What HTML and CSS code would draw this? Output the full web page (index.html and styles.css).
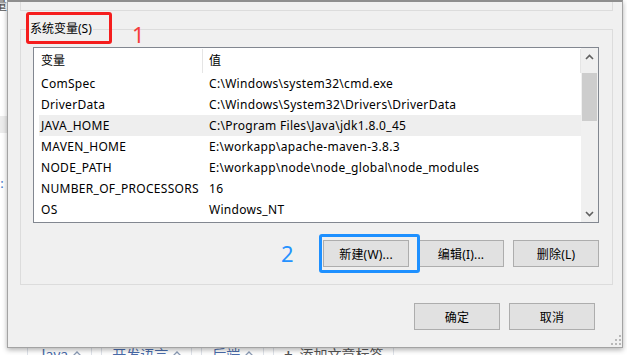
FILE: index.html
```html
<!DOCTYPE html>
<html lang="zh-CN">
<head>
    <meta charset="UTF-8">
    <title>环境变量</title>
    <link rel="stylesheet" href="styles.css">
</head>
<body>
    <div class="backdrop">
        <div class="edge-text">量</div>
        <div class="edge-bar"></div>
        <div class="edge-link">i:</div>
        <div class="tag-row">
            <span class="tag">Java <svg class="caret" width="10" height="6" viewBox="0 0 10 6"><path d="M1 5 L5 1 L9 5" fill="none" stroke="#8a9ab5" stroke-width="1.3"/></svg></span>
            <span class="tag">开发语言 <svg class="caret" width="10" height="6" viewBox="0 0 10 6"><path d="M1 5 L5 1 L9 5" fill="none" stroke="#8a9ab5" stroke-width="1.3"/></svg></span>
            <span class="tag">后端 <svg class="caret" width="10" height="6" viewBox="0 0 10 6"><path d="M1 5 L5 1 L9 5" fill="none" stroke="#8a9ab5" stroke-width="1.3"/></svg></span>
            <span class="tag tag-add"><b>+</b> 添加文章标签</span>
        </div>
    </div>

    <div class="dialog">
        <div class="prev-group"></div>

        <div class="group">
            <span class="group-title">系统变量(S)</span>
            <div class="list">
                <div class="list-body">
                    <div class="list-head">
                        <div class="head-cell first">变量</div>
                        <div class="head-cell second">值</div>
                    </div>
                    <div class="row"><span>ComSpec</span><span>C:\Windows\system32\cmd.exe</span></div>
                    <div class="row"><span>DriverData</span><span>C:\Windows\System32\Drivers\DriverData</span></div>
                    <div class="row selected"><span>JAVA_HOME</span><span>C:\Program Files\Java\jdk1.8.0_45</span></div>
                    <div class="row"><span>MAVEN_HOME</span><span>E:\workapp\apache-maven-3.8.3</span></div>
                    <div class="row"><span>NODE_PATH</span><span>E:\workapp\node\node_global\node_modules</span></div>
                    <div class="row"><span>NUMBER_OF_PROCESSORS</span><span>16</span></div>
                    <div class="row"><span>OS</span><span>Windows_NT</span></div>
                </div>
                <div class="scrollbar">
                    <div class="scroll-btn">
                        <svg width="9" height="6" viewBox="0 0 9 6"><path d="M1 5 L4.5 1.5 L8 5" fill="none" stroke="#606060" stroke-width="1.6"/></svg>
                    </div>
                    <div class="scroll-track"><div class="scroll-thumb"></div></div>
                    <div class="scroll-btn">
                        <svg width="9" height="6" viewBox="0 0 9 6"><path d="M1 1 L4.5 4.5 L8 1" fill="none" stroke="#606060" stroke-width="1.6"/></svg>
                    </div>
                </div>
            </div>
            <div class="button-row">
                <button>新建(W)...</button>
                <button>编辑(I)...</button>
                <button>删除(L)</button>
            </div>
        </div>

        <div class="footer">
            <button>确定</button>
            <button>取消</button>
        </div>

        <svg class="grip" width="10" height="10" viewBox="0 0 10 10">
            <rect x="8" y="0" width="2" height="2" fill="#b8b8b8"/>
            <rect x="4" y="4" width="2" height="2" fill="#b8b8b8"/>
            <rect x="8" y="4" width="2" height="2" fill="#b8b8b8"/>
            <rect x="0" y="8" width="2" height="2" fill="#b8b8b8"/>
            <rect x="4" y="8" width="2" height="2" fill="#b8b8b8"/>
            <rect x="8" y="8" width="2" height="2" fill="#b8b8b8"/>
        </svg>
    </div>

    <!-- annotations drawn on top of the screenshot -->
    <div class="mark-red"></div>
    <div class="num num-red">1</div>
    <div class="num num-blue">2</div>
    <div class="mark-blue"></div>
</body>
</html>
```

FILE: styles.css
```css
body {
    margin: 0;
    width: 627px;
    height: 355px;
    overflow: hidden;
    position: relative;
    background-color: #fff;
    font-family: "Noto Sans", "Noto Sans CJK SC", sans-serif;
}
.backdrop {
    height: 355px;
    display: flex;
    flex-direction: column;
}
.edge-text {
    margin: -4px 0 0 -6px;
    font-size: 13px;
    line-height: 16px;
    color: #555;
}
.edge-bar {
    margin-top: 104px;
    width: 7px;
    height: 17px;
    background-color: #ececec;
}
.edge-link {
    margin: 42px 0 0 -3px;
    font-size: 13px;
    line-height: 16px;
    color: #3d74c6;
}
.tag-row {
    margin-top: auto;
    margin-bottom: -17px;
    padding-left: 27px;
    display: flex;
    gap: 9px;
}
.tag {
    height: 30px;
    box-sizing: border-box;
    padding: 0 9px 0 10px;
    border: 1px solid #dfe3ea;
    font-size: 14px;
    line-height: 22px;
    color: #4a6cab;
    display: flex;
    align-items: flex-start;
    gap: 4px;
    font-family: "Noto Sans CJK SC", sans-serif;
}
.caret {
    margin-top: 8px;
}
.tag-add {
    color: #555;
}
.tag-add b {
    font-weight: 700;
    margin-right: 3px;
}

.dialog {
    position: absolute;
    left: 7px;
    top: 0;
    width: 616px;
    height: 348px;
    box-sizing: border-box;
    background-color: #f0f0f0;
    border: 1px solid #a3a3a3;
    border-top: 2px solid #8e8e8e;
    box-shadow: 0 2px 5px rgba(0, 0, 0, 0.3);
    font-size: 12px;
    color: #000;
    display: flex;
    flex-direction: column;
}
.prev-group {
    height: 9px;
    box-sizing: border-box;
    margin: 0 9px 0 12px;
    border: 1px solid #dcdcdc;
    border-top: none;
}
.group {
    position: relative;
    margin: 18px 9px 0 12px;
    padding: 17px 13px 17px 12px;
    border: 1px solid #dcdcdc;
}
.group-title {
    position: absolute;
    top: -9px;
    left: 8px;
    padding: 0 1px;
    line-height: 16px;
    background-color: #f0f0f0;
}
.list {
    height: 176px;
    box-sizing: border-box;
    border: 1px solid #828790;
    background-color: #fff;
    display: flex;
}
.list-body {
    flex: 1;
}
.list-head {
    height: 25px;
    display: flex;
    line-height: 25px;
}
.head-cell {
    border-right: 1px solid #e5e5e5;
    margin: 1px 0 0;
    line-height: 23px;
}
.head-cell.first {
    width: 161px;
    padding-left: 7px;
}
.head-cell.second {
    flex: 1;
    padding-left: 6px;
}
.row {
    height: 21px;
    margin-left: 5px;
    padding-left: 2px;
    line-height: 21px;
    letter-spacing: 0.3px;
    display: grid;
    grid-template-columns: 168px 1fr;
    white-space: nowrap;
}
.row.selected {
    background-color: #eeeeee;
}
.scrollbar {
    width: 17px;
    background-color: #f0f0f0;
    display: flex;
    flex-direction: column;
}
.scroll-btn {
    height: 17px;
    display: flex;
    justify-content: center;
    align-items: center;
}
.scroll-track {
    flex: 1;
    padding: 8px 1px 0;
}
.scroll-thumb {
    height: 48px;
    background-color: #cdcdcd;
}
.button-row {
    margin-top: 17px;
    display: flex;
    justify-content: flex-end;
    gap: 9px;
}
button {
    width: 86px;
    height: 27px;
    box-sizing: border-box;
    border: 1px solid #adadad;
    background-color: #e1e1e1;
    font-family: "Noto Sans", "Noto Sans CJK SC", sans-serif;
    font-size: 12px;
    letter-spacing: 0.2px;
    color: #000;
    padding: 0;
}
.footer {
    margin: 18px 27px 0 0;
    display: flex;
    justify-content: flex-end;
    gap: 9px;
}
.grip {
    position: absolute;
    right: 1px;
    bottom: 2px;
}

.mark-red {
    position: absolute;
    left: 26px;
    top: 12px;
    width: 86px;
    height: 32px;
    box-sizing: border-box;
    border: 3px solid #f51d1d;
    border-radius: 3px;
}
.mark-blue {
    position: absolute;
    left: 319px;
    top: 234px;
    width: 101px;
    height: 39px;
    box-sizing: border-box;
    border: 3px solid #1e90ff;
    border-radius: 3px;
}
.num {
    position: absolute;
    font-size: 22px;
    line-height: 24px;
}
.num-red {
    left: 132px;
    top: 22px;
    color: #f53c3c;
}
.num-blue {
    left: 281px;
    top: 241px;
    color: #2592ff;
}
```
